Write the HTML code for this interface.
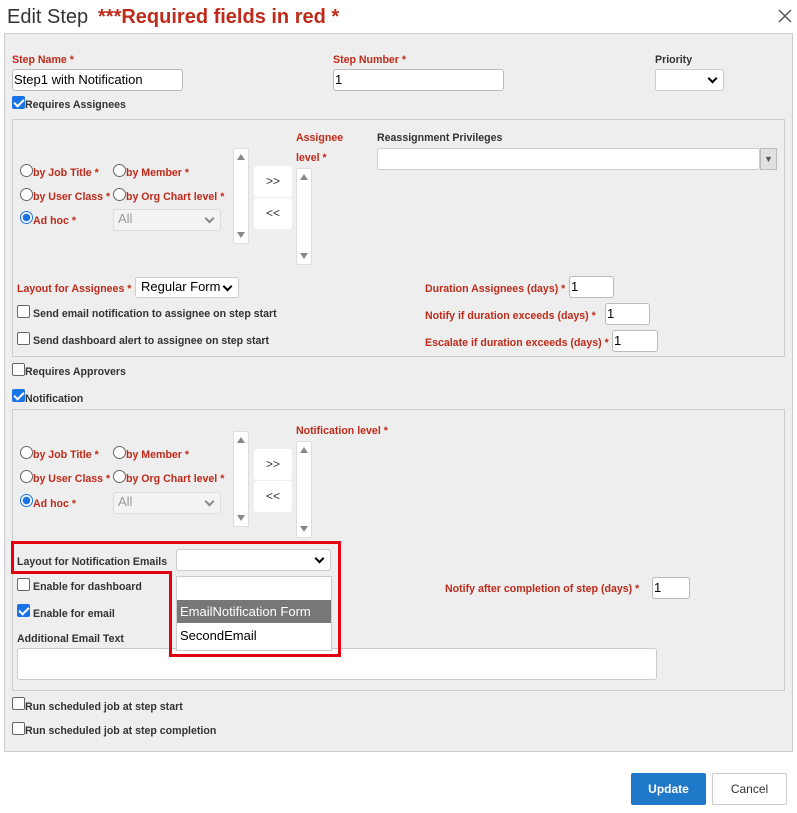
<!DOCTYPE html>
<html><head><meta charset="utf-8"><style>
*{box-sizing:border-box;margin:0;padding:0}
body{width:797px;height:813px;background:#fff;position:relative;font-family:"Liberation Sans",sans-serif;overflow:hidden}
.a{position:absolute}
.t{position:absolute;font-weight:bold;font-size:10.6px;white-space:nowrap;color:#333;line-height:14px;margin-top:1px}
.r{color:#bf2a1a}
.in{position:absolute;background:#fff;border:1px solid #bbb;border-radius:3px;font-size:13px;line-height:19px;padding-left:1px;color:#000}
.sel{position:absolute;background:#fff;border:1px solid #ccc;border-radius:3px;font-size:13px;line-height:18px;padding-left:4px}
.sel:after{content:"";position:absolute;right:7px;top:5px;width:5px;height:5px;border-right:2px solid #000;border-bottom:2px solid #000;transform:rotate(45deg)}
.sel.dis{background:#f3f3f3;color:#999;border-color:#ddd}
.sel.dis:after{border-color:#888}
.box{position:absolute;border:1px solid #ccc;background:#eee}
.rad{position:absolute;width:13px;height:13px;border:1px solid #666;border-radius:50%;background:#fff}
.rad.on{border:1px solid #1a73e8;background:radial-gradient(circle,#1a73e8 3.5px,#fff 4px)}
.cb{position:absolute;width:13px;height:13px;border:1px solid #666;border-radius:2px;background:#fff}
.cb.on{background:#1a73e8;border-color:#1a73e8}
.cb.on:after{content:"";position:absolute;left:3px;top:0px;width:4px;height:8px;border-right:2px solid #fff;border-bottom:2px solid #fff;transform:rotate(45deg)}
.lb{position:absolute;width:16px;background:#fff;border:1px solid #ddd;border-radius:2px}
.lb:before{content:"";position:absolute;left:3px;top:5px;border:4px solid transparent;border-bottom:6px solid #888;border-top:0}
.lb:after{content:"";position:absolute;left:3px;bottom:5px;border:4px solid transparent;border-top:6px solid #888;border-bottom:0}
.btn{position:absolute;background:#fff;border-radius:3px;font-size:12px;text-align:center;color:#333}
</style></head><body>
<div class="a" style="left:7px;top:6px;font-size:20px;color:#333;white-space:nowrap">Edit Step</div>
<div class="a" style="left:98px;top:6px;font-size:20px;font-weight:bold;color:#bf2a1a;white-space:nowrap">***Required fields in red *</div>
<svg class="a" style="left:778px;top:9px" width="14" height="14"><path d="M1 1L13 13M13 1L1 13" stroke="#555" stroke-width="1.5"/></svg>

<div class="box" style="left:4px;top:33px;width:789px;height:719px"></div>

<div class="t r" style="left:12px;top:52px">Step Name *</div>
<div class="in" style="left:12px;top:69px;width:171px;height:22px">Step1 with Notification</div>
<div class="t r" style="left:333px;top:52px">Step Number *</div>
<div class="in" style="left:333px;top:69px;width:171px;height:22px">1</div>
<div class="t" style="left:655px;top:52px">Priority</div>
<div class="sel" style="left:655px;top:69px;width:69px;height:22px"></div>

<div class="cb on" style="left:12px;top:96px"></div>
<div class="t" style="left:25px;top:97px">Requires Assignees</div>

<div class="box" style="left:12px;top:119px;width:773px;height:238px"></div>
<div class="t r" style="left:296px;top:130px">Assignee</div>
<div class="t r" style="left:296px;top:150px">level *</div>
<div class="t" style="left:377px;top:130px">Reassignment Privileges</div>
<div class="a" style="left:377px;top:148px;width:383px;height:22px;background:#fff;border:1px solid #ccc;border-radius:3px"></div>
<div class="a" style="left:760px;top:148px;width:17px;height:22px;background:#e0e0e0;border:1px solid #bbb;font-size:9px;text-align:center;line-height:20px;color:#555">▼</div>

<div class="rad" style="left:20px;top:164px"></div><div class="t r" style="left:33px;top:165px">by Job Title *</div>
<div class="rad" style="left:113px;top:164px"></div><div class="t r" style="left:126px;top:165px">by Member *</div>
<div class="rad" style="left:20px;top:188px"></div><div class="t r" style="left:33px;top:189px">by User Class *</div>
<div class="rad" style="left:113px;top:188px"></div><div class="t r" style="left:126px;top:189px">by Org Chart level *</div>
<div class="rad on" style="left:20px;top:211px"></div><div class="t r" style="left:33px;top:213px">Ad hoc *</div>
<div class="sel dis" style="left:113px;top:209px;width:108px;height:22px">All</div>
<div class="lb" style="left:233px;top:148px;height:96px"></div>
<div class="btn" style="left:254px;top:166px;width:38px;height:31px;line-height:31px">&gt;&gt;</div>
<div class="btn" style="left:254px;top:198px;width:38px;height:31px;line-height:31px">&lt;&lt;</div>
<div class="lb" style="left:296px;top:168px;height:97px"></div>

<div class="t r" style="left:17px;top:281px">Layout for Assignees *</div>
<div class="sel" style="left:135px;top:277px;width:104px;height:21px;padding-left:5px;padding-right:16px;color:#000">Regular Form</div>
<div class="cb" style="left:17px;top:305px"></div><div class="t" style="left:33px;top:306px">Send email notification to assignee on step start</div>
<div class="cb" style="left:17px;top:332px"></div><div class="t" style="left:33px;top:333px">Send dashboard alert to assignee on step start</div>
<div class="t r" style="left:425px;top:281px">Duration Assignees (days) *</div>
<div class="in" style="left:569px;top:276px;width:45px;height:22px">1</div>
<div class="t r" style="left:425px;top:308px">Notify if duration exceeds (days) *</div>
<div class="in" style="left:605px;top:303px;width:45px;height:22px">1</div>
<div class="t r" style="left:425px;top:335px">Escalate if duration exceeds (days) *</div>
<div class="in" style="left:612px;top:330px;width:46px;height:22px">1</div>

<div class="cb" style="left:12px;top:363px"></div><div class="t" style="left:25px;top:364px">Requires Approvers</div>
<div class="cb on" style="left:12px;top:389px"></div><div class="t" style="left:25px;top:391px">Notification</div>

<div class="box" style="left:12px;top:409px;width:773px;height:282px"></div>
<div class="t r" style="left:296px;top:423px">Notification level *</div>
<div class="rad" style="left:20px;top:446px"></div><div class="t r" style="left:33px;top:447px">by Job Title *</div>
<div class="rad" style="left:113px;top:446px"></div><div class="t r" style="left:126px;top:447px">by Member *</div>
<div class="rad" style="left:20px;top:470px"></div><div class="t r" style="left:33px;top:471px">by User Class *</div>
<div class="rad" style="left:113px;top:470px"></div><div class="t r" style="left:126px;top:471px">by Org Chart level *</div>
<div class="rad on" style="left:20px;top:494px"></div><div class="t r" style="left:33px;top:496px">Ad hoc *</div>
<div class="sel dis" style="left:113px;top:492px;width:108px;height:22px">All</div>
<div class="lb" style="left:233px;top:431px;height:96px"></div>
<div class="btn" style="left:254px;top:449px;width:38px;height:31px;line-height:31px">&gt;&gt;</div>
<div class="btn" style="left:254px;top:481px;width:38px;height:31px;line-height:31px">&lt;&lt;</div>
<div class="lb" style="left:296px;top:441px;height:97px"></div>

<div class="t" style="left:17px;top:554px">Layout for Notification Emails</div>
<div class="sel" style="left:176px;top:549px;width:155px;height:22px"></div>
<div class="cb" style="left:17px;top:578px"></div><div class="t" style="left:33px;top:579px">Enable for dashboard</div>
<div class="cb on" style="left:17px;top:604px"></div><div class="t" style="left:33px;top:606px">Enable for email</div>
<div class="t" style="left:17px;top:631px">Additional Email Text</div>
<div class="a" style="left:17px;top:648px;width:640px;height:32px;background:#fff;border:1px solid #ccc;border-radius:3px"></div>
<div class="t r" style="left:445px;top:581px">Notify after completion of step (days) *</div>
<div class="in" style="left:652px;top:577px;width:38px;height:22px">1</div>

<div class="a" style="left:176px;top:576px;width:156px;height:75px;background:#fff;border:1px solid #ccc"></div>
<div class="a" style="left:177px;top:600px;width:154px;height:23px;background:#777;color:#fff;font-size:13px;line-height:23px;padding-left:3px">EmailNotification Form</div>
<div class="a" style="left:177px;top:624px;width:154px;height:23px;color:#000;font-size:13px;line-height:23px;padding-left:3px">SecondEmail</div>
<svg class="a" style="left:0;top:0" width="797" height="813"><path d="M12.5 542.5H339.5V655.5H170.5V572.5H12.5Z" fill="none" stroke="#e00010" stroke-width="3"/></svg>

<div class="cb" style="left:12px;top:697px"></div><div class="t" style="left:25px;top:699px">Run scheduled job at step start</div>
<div class="cb" style="left:12px;top:722px"></div><div class="t" style="left:25px;top:723px">Run scheduled job at step completion</div>

<div class="a" style="left:631px;top:773px;width:75px;height:32px;background:#1f78c8;border-radius:2px;color:#fff;font-size:12px;font-weight:bold;text-align:center;line-height:32px">Update</div>
<div class="a" style="left:712px;top:773px;width:75px;height:32px;background:#fff;border:1px solid #ccc;border-radius:2px;color:#333;font-size:12px;text-align:center;line-height:30px">Cancel</div>
</body></html>
